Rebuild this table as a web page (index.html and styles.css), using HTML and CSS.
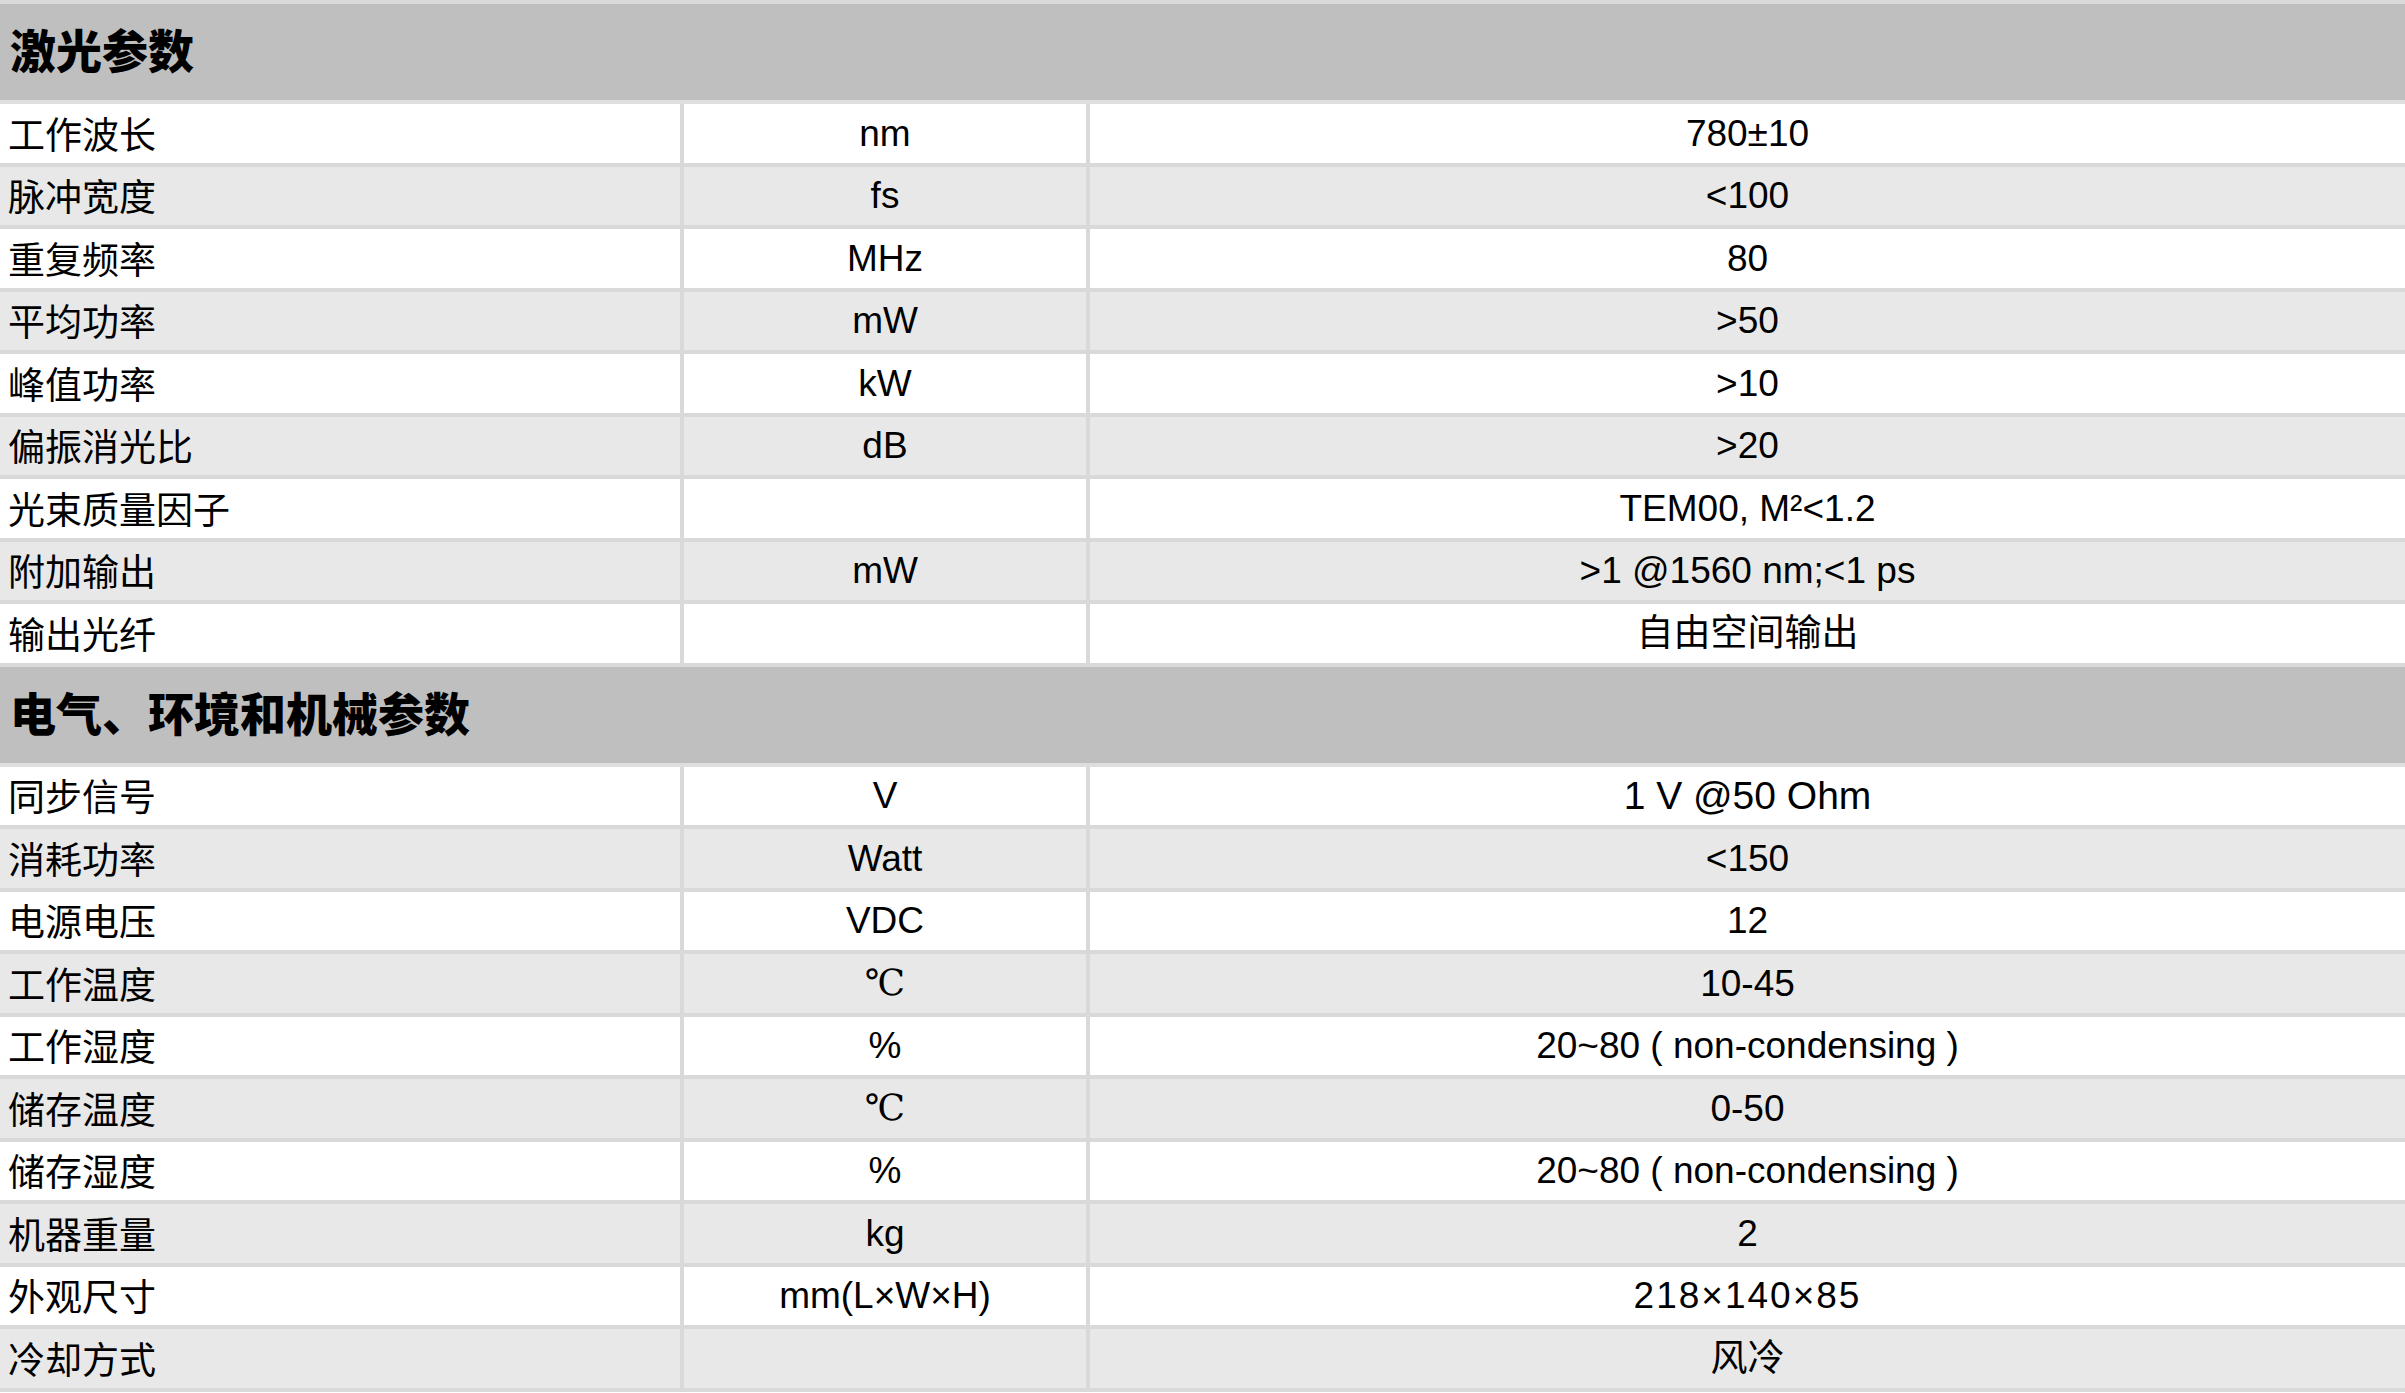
FILE: index.html
```html
<!DOCTYPE html>
<html lang="zh-CN">
<head>
<meta charset="utf-8">
<title>参数</title>
<link rel="stylesheet" href="styles.css">
</head>
<body>
<div class="spec">
  <div class="section-head">激光参数</div>
  <div class="row"><div class="c name">工作波长</div><div class="c unit">nm</div><div class="c val">780±10</div></div>
  <div class="row alt"><div class="c name">脉冲宽度</div><div class="c unit">fs</div><div class="c val">&lt;100</div></div>
  <div class="row"><div class="c name">重复频率</div><div class="c unit">MHz</div><div class="c val">80</div></div>
  <div class="row alt"><div class="c name">平均功率</div><div class="c unit">mW</div><div class="c val">&gt;50</div></div>
  <div class="row"><div class="c name">峰值功率</div><div class="c unit">kW</div><div class="c val">&gt;10</div></div>
  <div class="row alt"><div class="c name">偏振消光比</div><div class="c unit">dB</div><div class="c val">&gt;20</div></div>
  <div class="row"><div class="c name">光束质量因子</div><div class="c unit"></div><div class="c val">TEM00, M²&lt;1.2</div></div>
  <div class="row alt"><div class="c name">附加输出</div><div class="c unit">mW</div><div class="c val">&gt;1 @1560 nm;&lt;1 ps</div></div>
  <div class="row"><div class="c name">输出光纤</div><div class="c unit"></div><div class="c val">自由空间输出</div></div>

  <div class="section-head">电气、环境和机械参数</div>
  <div class="row"><div class="c name">同步信号</div><div class="c unit">V</div><div class="c val val-lg">1 V @50 Ohm</div></div>
  <div class="row alt"><div class="c name">消耗功率</div><div class="c unit">Watt</div><div class="c val">&lt;150</div></div>
  <div class="row"><div class="c name">电源电压</div><div class="c unit">VDC</div><div class="c val">12</div></div>
  <div class="row alt"><div class="c name">工作温度</div><div class="c unit"><span class="deg">℃</span></div><div class="c val">10-45</div></div>
  <div class="row"><div class="c name">工作湿度</div><div class="c unit">%</div><div class="c val">20~80 ( non-condensing )</div></div>
  <div class="row alt"><div class="c name">储存温度</div><div class="c unit"><span class="deg">℃</span></div><div class="c val">0-50</div></div>
  <div class="row"><div class="c name">储存湿度</div><div class="c unit">%</div><div class="c val">20~80 ( non-condensing )</div></div>
  <div class="row alt"><div class="c name">机器重量</div><div class="c unit">kg</div><div class="c val">2</div></div>
  <div class="row"><div class="c name">外观尺寸</div><div class="c unit">mm(L×W×H)</div><div class="c val val-wide">218×140×85</div></div>
  <div class="row alt"><div class="c name">冷却方式</div><div class="c unit"></div><div class="c val">风冷</div></div>
</div>
</body>
</html>
```
FILE: styles.css
```css
html, body {
  margin: 0;
  padding: 0;
  background: #ffffff;
}
body {
  font-family: "Liberation Sans", "Noto Sans CJK SC", sans-serif;
  color: #000000;
}
.spec {
  border-top: 4px solid #d9d9d9;
}
.section-head {
  height: 100px;
  box-sizing: border-box;
  background: #bfbfbf;
  border-bottom: 4px solid #dedede;
  display: flex;
  align-items: center;
  padding-left: 10px;
  padding-bottom: 8px;
  font-family: "Noto Sans CJK SC", sans-serif;
  font-weight: 900;
  font-size: 46px;
}
.row {
  display: grid;
  grid-template-columns: 684px 406px 1fr;
  height: 62.5px;
  background: #ffffff;
}
.row.alt {
  background: #e8e8e8;
}
.c {
  box-sizing: border-box;
  border-bottom: 4px solid #d9d9d9;
  display: flex;
  align-items: center;
  font-size: 37px;
  line-height: 1;
  white-space: nowrap;
}
.name {
  border-right: 4px solid #d9d9d9;
  padding-left: 8px;
  font-family: "Noto Sans CJK SC", sans-serif;
  font-size: 37px;
}
.unit {
  border-right: 4px solid #d9d9d9;
  justify-content: center;
}
.val {
  justify-content: center;
}
.val-lg {
  font-size: 39px;
}
.val-wide {
  letter-spacing: 2px;
}
.deg {
  font-family: "Liberation Serif", "DejaVu Serif", serif;
  font-size: 36px;
}
```
